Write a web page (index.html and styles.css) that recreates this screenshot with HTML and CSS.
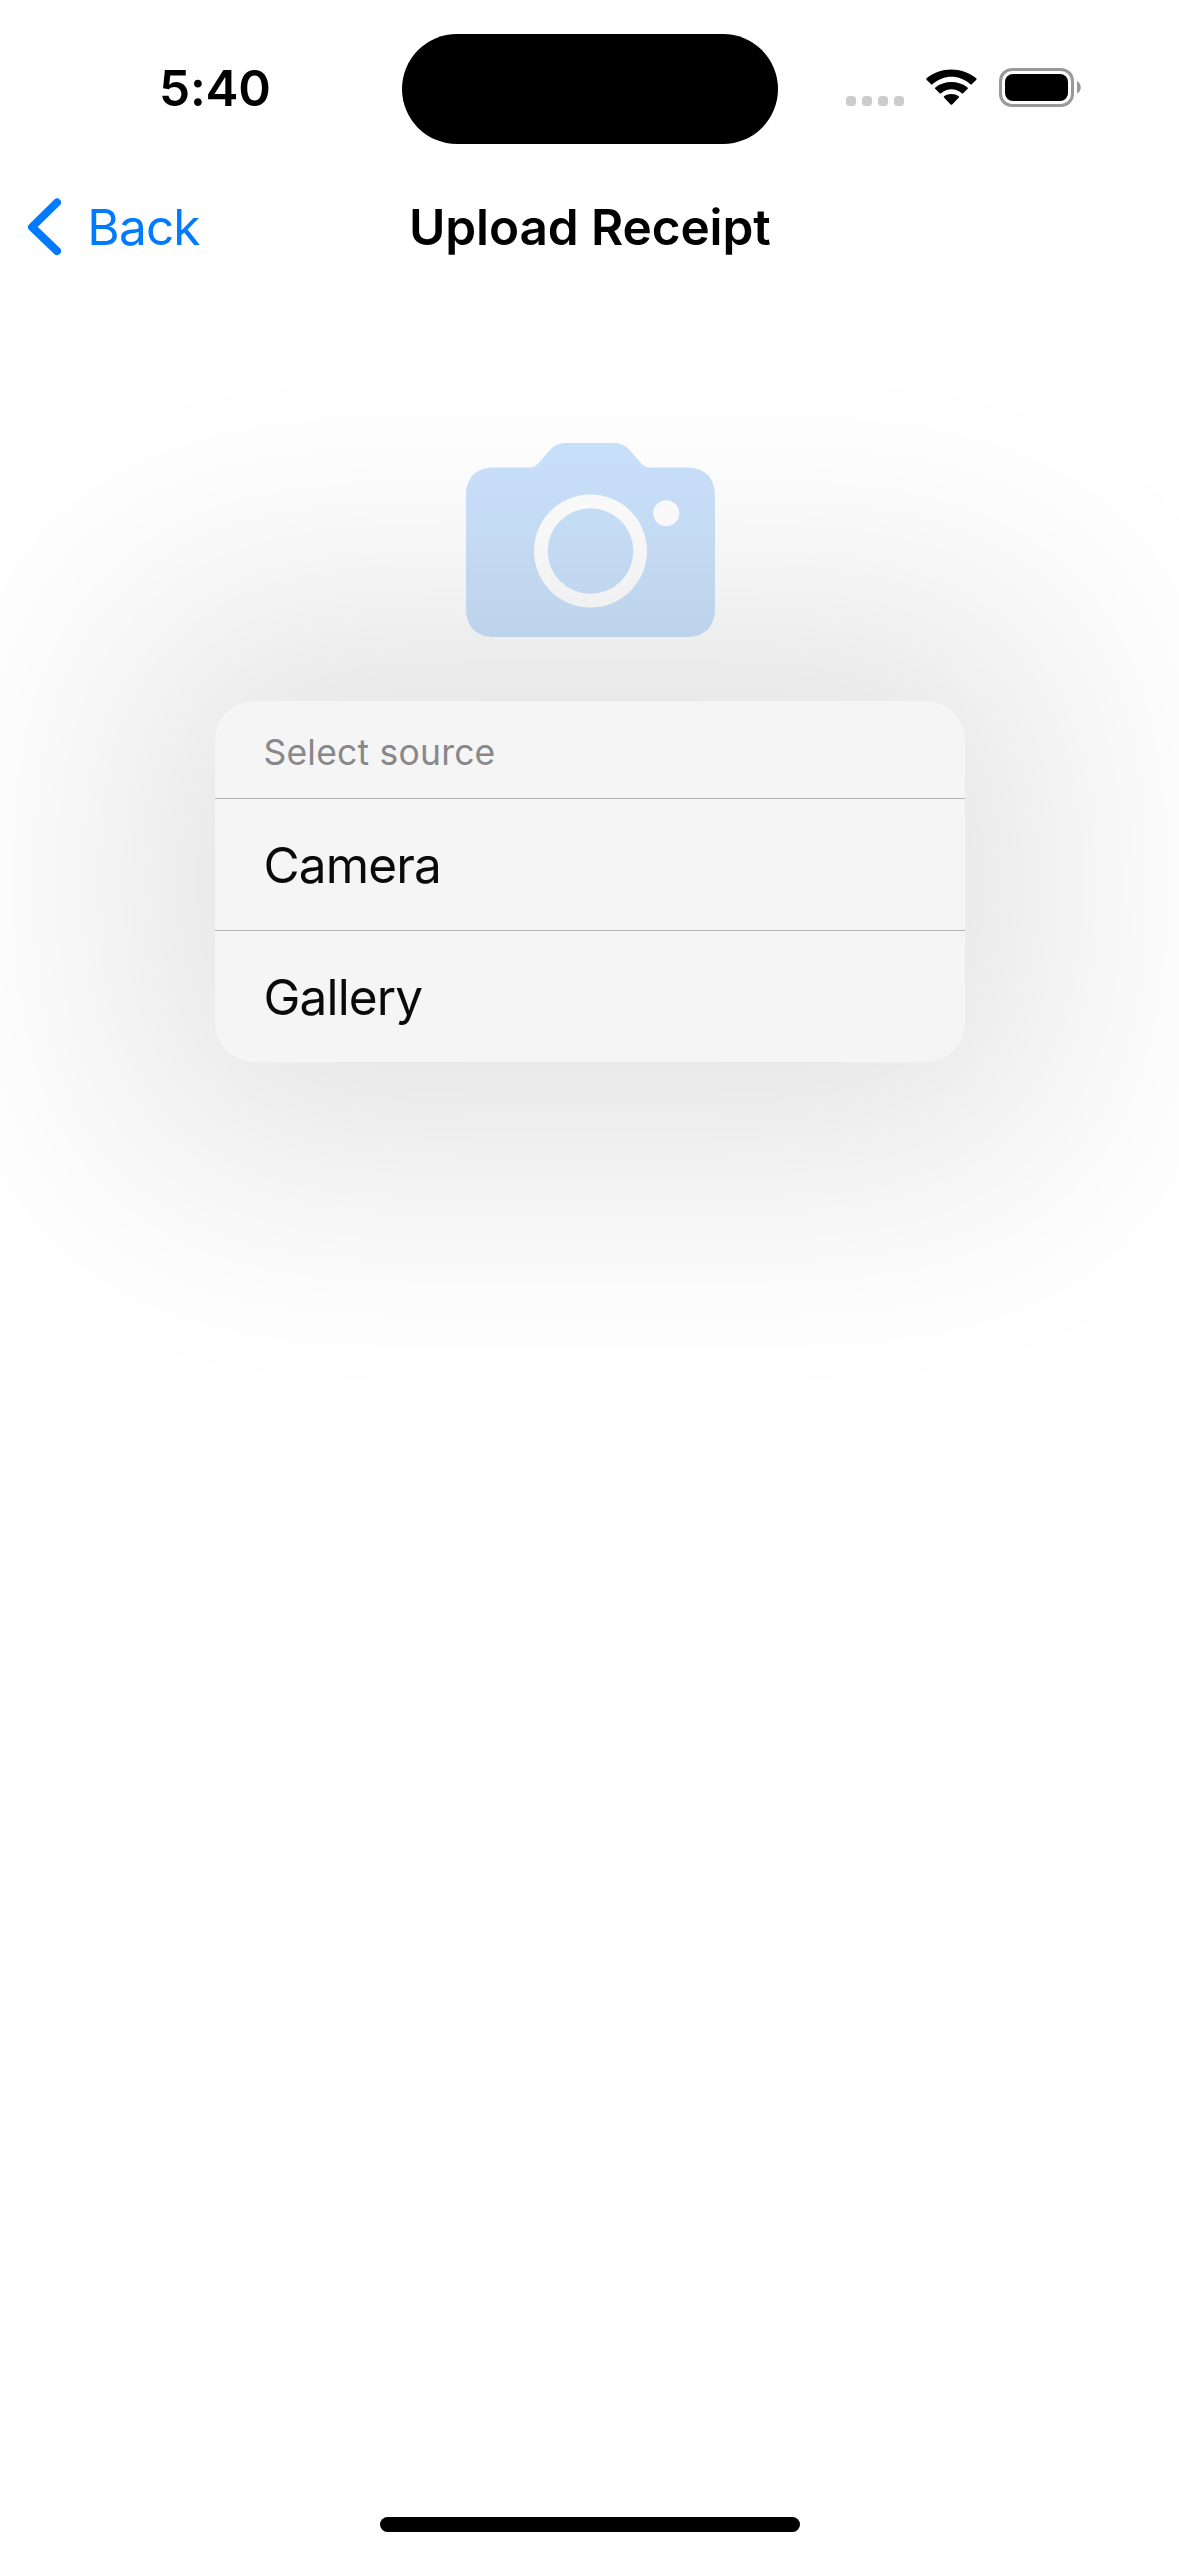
FILE: index.html
```html
<!DOCTYPE html>
<html lang="en">
<head>
<meta charset="utf-8">
<title>Upload Receipt</title>
<link rel="stylesheet" href="styles.css">
</head>
<body>
<div class="screen">
  <header class="status-bar">
    <div class="time-slot"><span class="time">5:40</span></div>
    <div class="island"></div>
    <div class="indicators">
      <div class="signal"><i></i><i></i><i></i><i></i></div>
      <svg class="wifi" width="52" height="38" viewBox="0 0 52 38">
        <path d="M.5 10.5Q0 9.8 .6 9.1C14.5-3 37-3 51.2 9.1Q51.9 9.8 51.3 10.5L46.6 15.2Q46 15.7 45.3 15.2C34 5 18 5 6.600 15.200Q6 15.700 5.300 15.200Z"/>
        <path d="M9.300 19.800Q8.800 19.200 9.500 18.500C18.500 11 33.400 11 42.400 18.500Q43.100 19.200 42.500 19.800L37.900 24.400Q37.200 24.900 36.500 24.400C30 19 21.800 19 15.400 24.400Q14.600 24.900 14 24.400Z"/>
        <path d="M18.300 28.700Q17.700 28.100 18.400 27.500C22.800 24.300 29 24.300 33.400 27.500Q34.100 28.100 33.500 28.700L26.700 35.800Q25.900 36.600 25.100 35.800Z"/>
      </svg>
      <svg class="battery" width="83" height="39" viewBox="0 0 83 39">
        <rect x="1.500" y="1.500" width="72" height="36" rx="11.500" fill="none" stroke="#999" stroke-width="3"/>
        <rect x="6" y="6" width="63" height="27" rx="8"/>
        <path d="M78 13C83 15.500 83 23.500 78 25.500Z" fill="#999"/>
      </svg>
    </div>
  </header>
  <nav class="nav-bar">
    <a class="back">
      <svg width="34" height="58" viewBox="0 0 34 58"><path d="M30 4.500 5 29 30 53" fill="none" stroke="#007aff" stroke-width="8" stroke-linecap="round" stroke-linejoin="round"/></svg>
      <span class="back-label">Back</span>
    </a>
    <h1 class="title"><span>Upload Receipt</span></h1>
  </nav>
  <main class="content">
    <svg class="camera" width="249" height="194" viewBox="0 0 249 194">
      <path fill="#cbe2fc" fill-rule="evenodd" d="M28 24.500H63C67.500 24.500 70 23 73 19.500L84 7C89 1.500 94 0 101 0H146C153 0 158.500 1.500 163.500 7L174.500 19.500C177.500 23 180 24.500 184.500 24.500H220C239 24.500 249 34.500 249 53V165C249 184 239 194 220 194H29C10 194 0 184 0 165V53C0 34.500 10 24.500 28 24.500ZM124.500 51.500A56.500 56.500 0 1 0 124.500 164.500A56.500 56.500 0 1 0 124.500 51.500ZM200.200 57.200A13 13 0 1 0 200.200 83.200A13 13 0 1 0 200.200 57.200Z"/>
      <circle cx="124.500" cy="108" r="42.800" fill="#cbe2fc"/>
    </svg>
    <section class="menu">
      <div class="menu-title"><span>Select source</span></div>
      <div class="menu-item"><span>Camera</span></div>
      <div class="menu-item"><span>Gallery</span></div>
    </section>
  </main>
  <footer class="home-area"><div class="home-indicator"></div></footer>
</div>
</body>
</html>
```
FILE: styles.css
```css
* { box-sizing: border-box; }
body { margin: 0; background: #fff; font-family: Inter, "Liberation Sans", sans-serif; color: #000; }
.screen { width: 1179px; height: 2556px; display: flex; flex-direction: column; overflow: hidden; background: #fff; }
.status-bar { height: 177px; display: grid; grid-template-columns: 401.5px 376px 1fr; align-items: start; padding-top: 33px; position: relative; z-index: 1; }
.time-slot { padding-left: 159px; padding-top: 25px; }
.time { display: block; font-size: 49.5px; line-height: 60px; font-weight: 600; letter-spacing: -0.2px; }
.island { height: 110.5px; margin-top: .5px; border-radius: 56px; background: #000; }
.indicators { display: flex; align-items: flex-start; padding: 35px 0 0 68.500px; }
.signal { display: flex; gap: 6px; padding-top: 28px; }
.signal i { width: 10px; height: 10px; border-radius: 3.500px; background: #ccc; }
.wifi { margin: 1px 0 0 21.500px; width: 51px; }
.battery { margin-left: 22.500px; }
.nav-bar { height: 132px; display: grid; grid-template-columns: 401px 376px 1fr; align-items: start; position: relative; z-index: 1; }
.back { display: flex; color: #007aff; padding: 20.500px 0 0 27px; }
.back-label { font-size: 49.5px; line-height: 60px; margin: -.5px 0 0 26.300px; letter-spacing: -0.8px; }
.title { margin: 20px 0 0; padding-left: 8px; font-size: 49.5px; line-height: 60px; font-weight: 600; letter-spacing: -0.1px; white-space: nowrap; }
.content { flex: 1; display: flex; flex-direction: column; align-items: center; padding-top: 134px; }
.camera { display: block; margin-left: 2px; }
.menu { margin-top: 64px; width: 750px; height: 361px; position: relative; isolation: isolate; color: #0a0a0a; }
/* wide ambient shadow behind the sheet */
.menu::before { content: ""; position: absolute; z-index: -2; inset: -104px -86px; border-radius: 60px; background: #0a0a02; opacity: .107; filter: blur(130px); }
.menu::after { content: ""; position: absolute; z-index: -1; inset: 0; border-radius: 39px; background: #f5f5f5; }
.menu-title { height: 98px; border-bottom: 1px solid #b3b3b3; padding: 23px 0 0 49px; font-size: 35.500px; line-height: 58px; letter-spacing: .2px; color: #88888b; }
.menu-item { height: 132px; padding: 36px 0 0 49px; font-size: 49.5px; line-height: 60px; letter-spacing: -.85px; }
.menu-item + .menu-item { height: 131px; }
.menu-item:nth-child(2) { border-bottom: 1px solid #b3b3b3; }
.home-area { height: 39px; display: flex; justify-content: center; padding-left: 1px; }
.home-indicator { width: 420px; height: 15px; border-radius: 8px; background: #000; }
```
